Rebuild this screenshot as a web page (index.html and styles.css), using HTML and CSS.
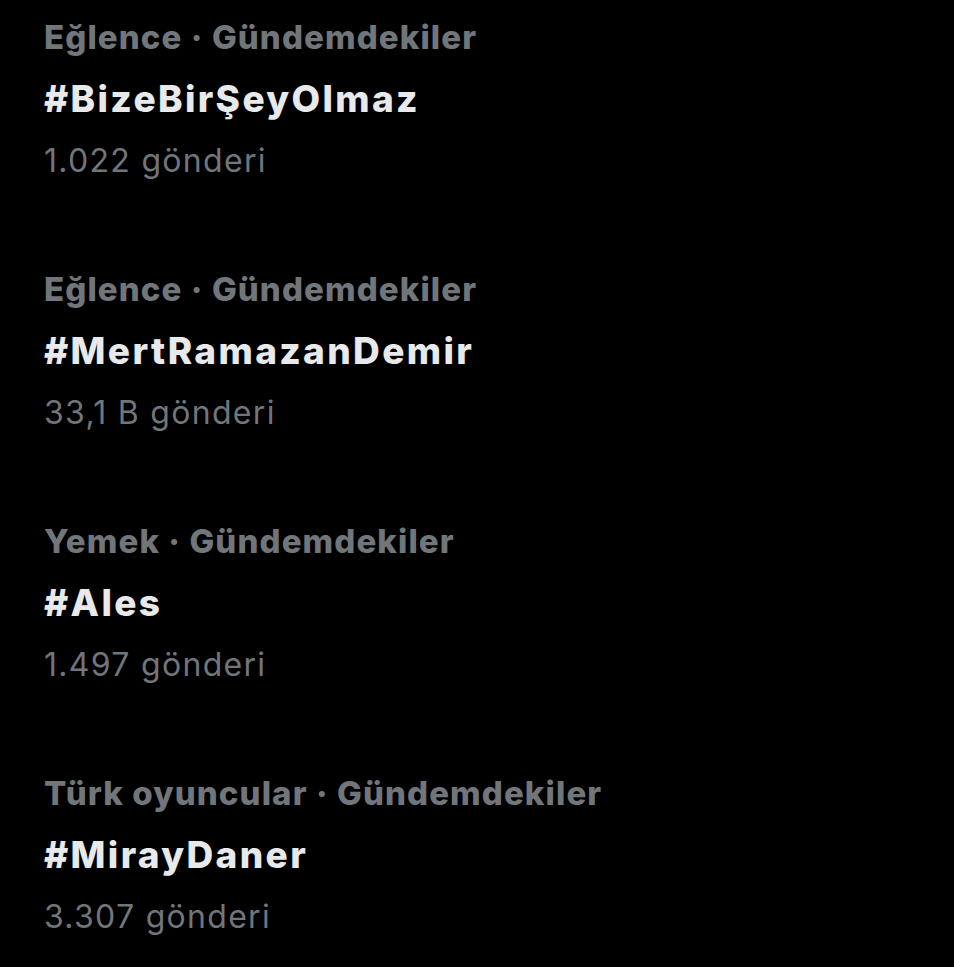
FILE: index.html
```html
<!DOCTYPE html>
<html lang="tr">
<head>
<meta charset="utf-8">
<link rel="stylesheet" href="styles.css">
</head>
<body>
<main class="trends">
  <div class="trend">
    <div class="meta">Eğlence · Gündemdekiler</div>
    <div class="name">#BizeBirŞeyOlmaz</div>
    <div class="count">1.022 gönderi</div>
  </div>
  <div class="trend">
    <div class="meta">Eğlence · Gündemdekiler</div>
    <div class="name">#MertRamazanDemir</div>
    <div class="count">33,1 B gönderi</div>
  </div>
  <div class="trend">
    <div class="meta">Yemek · Gündemdekiler</div>
    <div class="name">#Ales</div>
    <div class="count">1.497 gönderi</div>
  </div>
  <div class="trend">
    <div class="meta">Türk oyuncular · Gündemdekiler</div>
    <div class="name">#MirayDaner</div>
    <div class="count">3.307 gönderi</div>
  </div>
</main>
</body>
</html>
```

FILE: styles.css
```css
html, body {
  margin: 0;
  padding: 0;
  background: #000;
  height: 100%;
}
body {
  font-family: Inter, "Noto Sans", sans-serif;
}
.trends {
  display: flex;
  flex-direction: column;
  padding: 6px 0 0 44px;
  gap: 66px;
}
.trend {
  display: flex;
  flex-direction: column;
}
.meta {
  color: #71767b;
  font-weight: 800;
  font-size: 33px;
  letter-spacing: 1.1px;
  line-height: 62px;
  height: 62px;
}
.name {
  color: #e7e9ea;
  font-weight: 800;
  font-size: 37px;
  letter-spacing: 2.35px;
  line-height: 62px;
  height: 62px;
}
.count {
  color: #71767b;
  font-weight: 400;
  font-size: 32px;
  letter-spacing: 1.3px;
  line-height: 62px;
  height: 62px;
}
```
